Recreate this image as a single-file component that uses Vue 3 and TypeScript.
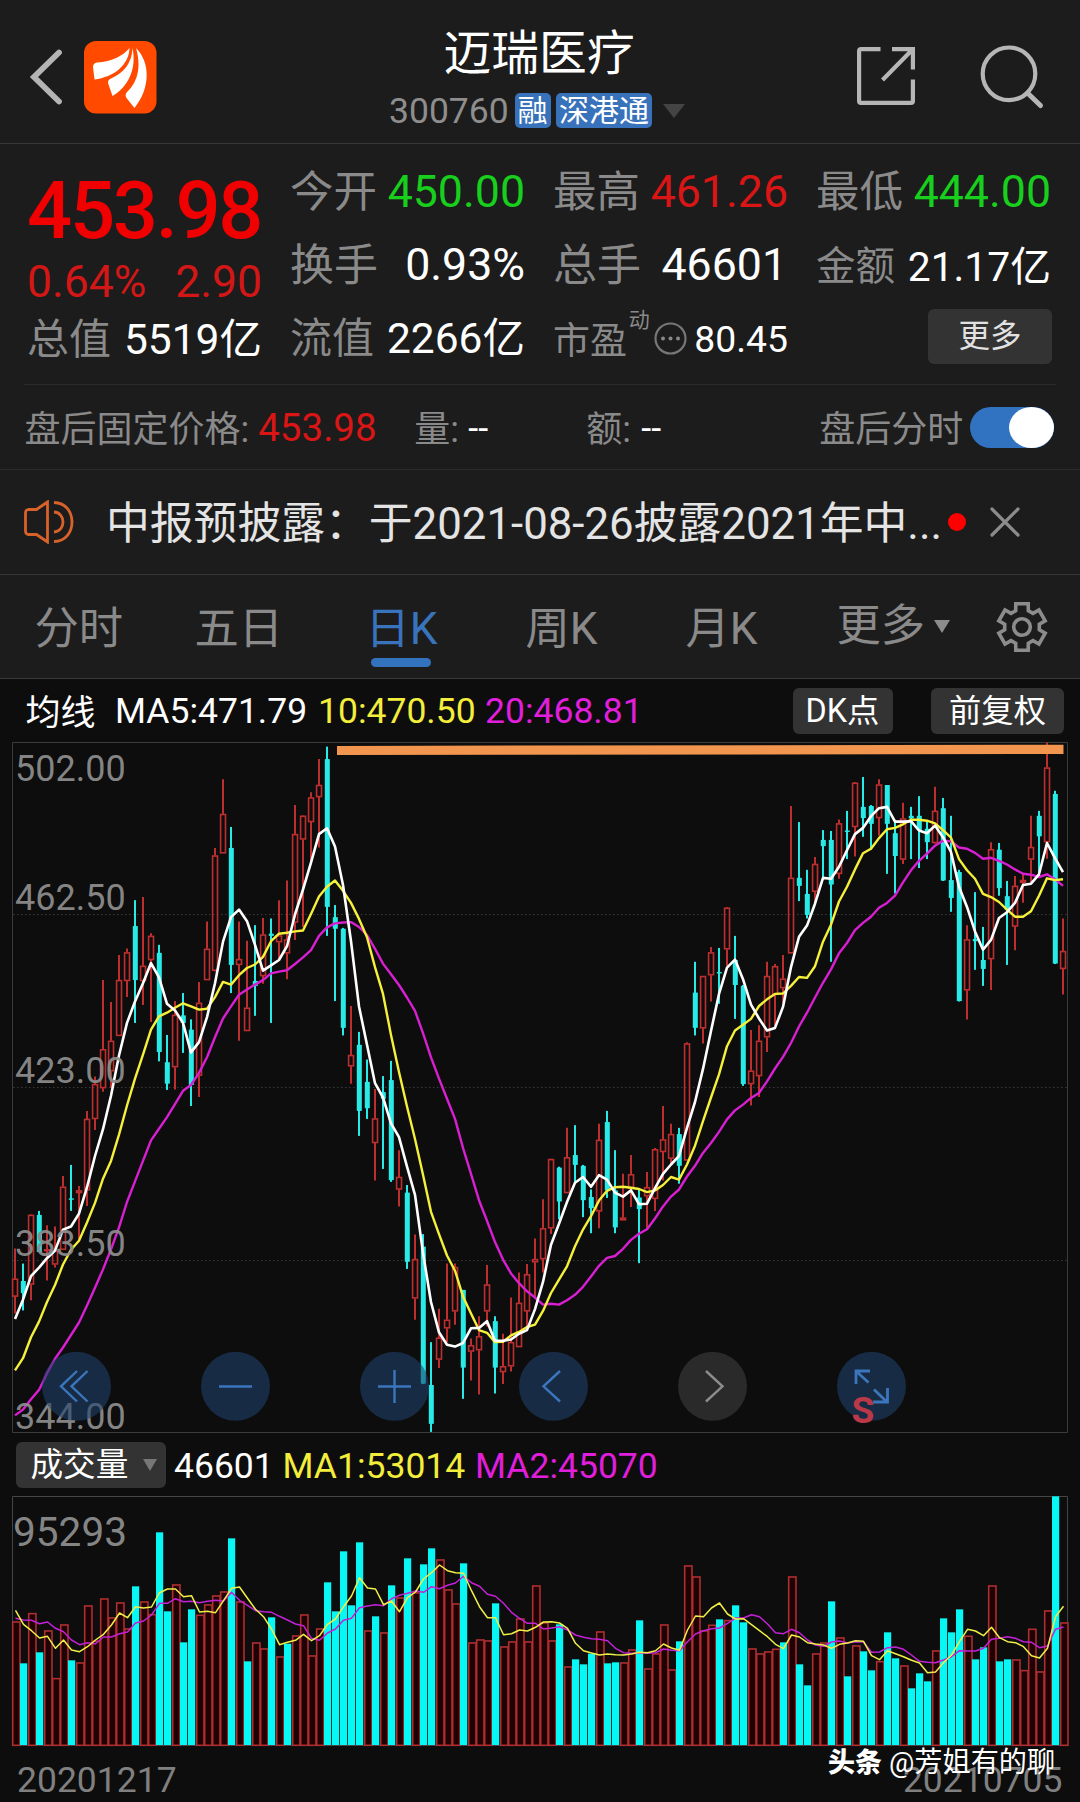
<script setup lang="ts">
type Candle = [kind: 'r' | 'c', high: number, top: number, bottom: number, low: number]

const STEP = 8
const FIRST = 15

// Daily candles, in ticks below the top of the price scale
const candleSource = `r1150,1218,1258,1296 c1184,1223,1250,1289 r1074,1075,1231,1266 c1066,1075,1158,1158 r1098,1152,1156,1222 r1101,1155,1186,1193 r988,1012,1153,1153 c963,1038,1041,1066 r1010,1020,1026,1130 r842,860,1020,1055 r765,782,860,885 r549,704,791,799
r598,685,753,790 r493,549,674,674 r478,487,551,587 c370,428,549,645 r363,517,551,605 r444,450,504,643 c470,488,710,731 c672,733,781,795 r596,627,744,794 c578,628,645,712 c637,660,784,831 r553,600,763,811
r418,479,549,549 r253,270,528,530 r99,177,265,265 c206,253,515,578 r418,502,515,685 r461,611,663,663 c426,551,562,629 r410,447,540,557 c411,445,450,645 r370,449,464,504 r326,458,489,547 r157,222,420,459
r180,181,234,430 r128,140,195,290 r54,112,139,252 c26,54,385,450 c381,408,434,596 c432,434,656,673 r607,717,742,781 c665,694,842,898 c727,777,836,860 r793,859,914,998 c764,800,815,972 c730,773,997,1001
r930,990,1018,1056 c1008,1025,1180,1196 r1119,1174,1262,1310 c1118,1146,1453,1454 c1360,1456,1543,1561 r1285,1350,1399,1418 r1184,1310,1329,1360 r1184,1192,1291,1321 c1243,1243,1417,1487 r1352,1367,1381,1446 r1302,1347,1378,1477 r1187,1231,1291,1325
c1302,1313,1417,1475 r1341,1414,1427,1454 r1260,1360,1414,1426 r1204,1272,1371,1371 r1185,1208,1291,1330 r1128,1174,1181,1262 r1040,1105,1174,1204 r949,950,1105,1118 c967,969,1045,1085 r880,946,1026,1026 c874,941,963,1003 c963,965,1042,1080
c1018,1035,1060,1116 r871,907,1067,1105 c842,867,1020,1037 c930,1020,1103,1116 r983,1081,1087,1087 r941,984,1015,1057 c1015,1036,1062,1183 r979,1013,1033,1105 r925,928,1039,1066 r831,906,934,998 r871,894,949,960 c880,894,965,1005
r688,691,953,953 c508,577,656,673 r540,540,657,691 r475,487,538,597 c477,531,534,602 r385,387,480,517 c450,504,560,636 c560,562,782,786 r661,752,782,830 r650,685,764,811 r508,540,677,710 r513,518,582,657
r493,546,567,600 r159,320,489,489 c195,320,338,372 c302,356,403,411 r273,289,351,380 c213,235,249,325 c215,235,335,508 r189,198,311,322 c170,214,217,278 r105,107,206,272 c94,161,186,228 c157,159,199,256
r99,111,186,225 c112,112,199,311 c190,220,271,355 r152,187,279,289 c161,181,187,278 c137,181,213,298 c193,210,240,278 r116,170,242,243 c141,164,326,327 c181,325,365,396 c302,307,596,597 r426,458,572,637
c352,457,462,526 c430,504,524,562 r240,256,502,571 c242,257,343,360 c327,361,392,515 r316,338,429,482 r310,325,331,376 r181,251,279,330 c170,181,227,310 r17,73,240,277 c125,132,512,513 r411,484,524,581`

const ma5 = [1308, 1265, 1212, 1193, 1172, 1155, 1108, 1101, 1072, 1013, 943, 883, 808, 718, 645, 597, 556, 511, 543, 602, 617, 645, 711, 688, 632, 556, 463, 408, 391, 417, 470, 528, 516, 504, 473, 402, 346, 286, 222, 209, 250, 336, 462, 608, 694, 780, 812, 870, 901, 967, 1030, 1160, 1270, 1338, 1366, 1370, 1362, 1329, 1328, 1313, 1357, 1357, 1354, 1341, 1333, 1286, 1225, 1142, 1095, 1046, 1003, 990, 1012, 986, 996, 1025, 1034, 1020, 1051, 1050, 1015, 983, 962, 943, 880, 822, 748, 663, 580, 521, 503, 547, 604, 635, 662, 656, 609, 520, 452, 427, 378, 320, 322, 295, 258, 222, 208, 182, 164, 161, 194, 194, 193, 214, 220, 203, 229, 262, 340, 385, 440, 481, 459, 410, 397, 376, 336, 333, 312, 242, 276, 307]
const ma10 = [1423, 1396, 1349, 1314, 1270, 1232, 1186, 1153, 1133, 1092, 1048, 994, 954, 895, 830, 770, 716, 660, 630, 622, 611, 601, 608, 615, 613, 587, 553, 559, 538, 522, 514, 497, 462, 445, 443, 440, 438, 401, 362, 340, 326, 349, 376, 412, 453, 520, 580, 672, 755, 832, 905, 985, 1068, 1118, 1166, 1200, 1258, 1296, 1333, 1339, 1360, 1359, 1345, 1337, 1326, 1321, 1290, 1250, 1220, 1190, 1145, 1108, 1078, 1043, 1021, 1013, 1012, 1014, 1017, 1024, 1020, 1008, 990, 996, 962, 920, 865, 812, 760, 697, 662, 649, 636, 607, 592, 580, 579, 562, 542, 544, 518, 463, 425, 373, 340, 301, 265, 255, 231, 211, 208, 200, 190, 190, 192, 198, 213, 230, 278, 303, 322, 356, 363, 374, 391, 407, 407, 395, 360, 321, 325, 323]
const ma20 = [1524, 1511, 1488, 1467, 1430, 1397, 1372, 1344, 1316, 1278, 1238, 1197, 1152, 1103, 1046, 1000, 954, 908, 882, 856, 827, 797, 784, 757, 722, 677, 635, 608, 582, 570, 559, 549, 534, 530, 527, 513, 498, 482, 450, 431, 422, 420, 419, 430, 448, 479, 512, 536, 560, 588, 618, 668, 722, 770, 815, 860, 925, 983, 1042, 1088, 1136, 1175, 1206, 1228, 1246, 1260, 1276, 1274, 1276, 1266, 1254, 1236, 1213, 1189, 1171, 1167, 1151, 1131, 1117, 1107, 1083, 1056, 1034, 1018, 989, 965, 936, 914, 889, 861, 841, 828, 813, 802, 776, 747, 721, 690, 653, 622, 588, 555, 525, 489, 466, 437, 421, 407, 387, 376, 360, 330, 303, 282, 266, 248, 237, 238, 252, 255, 264, 277, 275, 282, 290, 301, 311, 313, 318, 312, 323, 338]

// Volume bars: top edge of each bar
const volumeSource = `r575 c700 r550 c667 r602 r745 r584 c691 r698 r527 r633 r506 r563 r518 r596 c469 r515 r553 c307 c544 r464 c637 c538 r555 r524 r497 r485 c325 r515 c694 r638 r656 c562 r680 c641 r617 r554 r677 r596 c457 c544 c364 c526 c337 r602
c559 r608 c466 r503 c385 r488 c403 c355 r389 r479 r521 c400 r638 r629 r632 c520 r650 r635 r566 r635 r467 r578 r632 c583 r710 c688 c703 c671 r605 c700 c697 r698 r659 c571 r716 r671 r584 r719 c634 r407 r440 r602 r585 c568
r571 c526 c577 r656 r671 r665 r657 c637 r440 c703 c766 r671 r638 c514 r623 c739 r647 c664 c721 r694 c607 c685 r707 c775 c730 c754 r662 c565 c607 c538 r618 c688 c652 r467 c694 c688 r689 r721 r597 r725 r542 c199 r578`
const volMa1 = [541, 583, 602, 624, 619, 655, 630, 660, 665, 650, 630, 613, 585, 549, 563, 530, 534, 531, 488, 477, 477, 500, 497, 546, 544, 548, 512, 475, 471, 505, 538, 560, 597, 644, 637, 631, 613, 632, 617, 583, 567, 530, 498, 443, 474, 477, 524, 513, 545, 503, 486, 447, 428, 405, 422, 428, 430, 482, 530, 563, 563, 614, 611, 600, 603, 592, 576, 575, 579, 595, 640, 662, 669, 675, 672, 674, 675, 672, 667, 668, 662, 642, 654, 661, 600, 558, 560, 534, 519, 552, 567, 566, 584, 602, 620, 643, 656, 615, 621, 638, 642, 645, 655, 643, 639, 632, 634, 677, 689, 662, 671, 680, 691, 699, 728, 726, 698, 675, 635, 598, 603, 617, 592, 623, 635, 638, 650, 677, 684, 655, 560, 529]
const volMa2 = [565, 570, 571, 581, 576, 595, 605, 630, 644, 638, 641, 621, 621, 611, 606, 579, 573, 555, 520, 520, 506, 515, 514, 518, 514, 511, 513, 487, 511, 526, 542, 545, 547, 559, 570, 582, 587, 625, 631, 609, 597, 571, 565, 533, 528, 524, 527, 506, 496, 490, 483, 487, 470, 476, 466, 459, 439, 458, 469, 493, 499, 520, 547, 565, 580, 580, 597, 594, 590, 600, 615, 622, 626, 628, 632, 655, 668, 670, 668, 670, 668, 657, 661, 662, 635, 612, 602, 596, 594, 580, 564, 564, 554, 560, 582, 608, 611, 598, 608, 630, 645, 649, 636, 633, 639, 635, 636, 667, 666, 653, 651, 658, 675, 694, 697, 698, 690, 680, 662, 663, 663, 655, 628, 625, 620, 625, 635, 637, 653, 648, 598, 591]

const priceY = (v: number): number => v / 2.24 - 7
const volY = (v: number): number => v / 3 - 66
const x = (i: number): number => FIRST + i * STEP

const candles = candleSource.split(/\s+/).map((s, i) => {
  const [high, top, bottom, low] = s.slice(1).split(',').map(Number)
  const c: Candle = [s[0] as 'r' | 'c', high, top, bottom, low]
  const t = priceY(c[2])
  const b = priceY(c[3])
  return { up: c[0] === 'r', x: x(i), high: priceY(c[1]), top: t, bottom: Math.max(b, t + 1.4), low: priceY(c[4]) }
})

const volumes = volumeSource.split(/\s+/).map((s, i) => ({
  up: s[0] === 'r',
  x: x(i),
  top: volY(Number(s.slice(1))),
}))

const line = (values: number[], y: (v: number) => number, dx = 0): string =>
  values.map((v, i) => `${x(i) + dx},${y(v).toFixed(1)}`).join(' ')

const priceLabels = [
  { text: '502.00', y: 39 },
  { text: '462.50', y: 168 },
  { text: '423.00', y: 341 },
  { text: '383.50', y: 514 },
  { text: '344.00', y: 687 },
]
const tabs = [
  { text: '分时', cls: 't1' },
  { text: '五日', cls: 't2' },
  { text: '日K', cls: 't3 active' },
  { text: '周K', cls: 't4' },
  { text: '月K', cls: 't5' },
]
const gearPoints = (() => {
  const pts: string[] = []
  const shape: [number, number][] = [[-15, 24], [15, 24], [21, 17.5], [39, 17.5]]
  for (let k = 0; k < 6; k++) {
    for (const [a, r] of shape) {
      const t = ((k * 60 + a - 90) * Math.PI) / 180
      pts.push(`${(26 + r * Math.cos(t)).toFixed(1)},${(26 + r * Math.sin(t)).toFixed(1)}`)
    }
  }
  return pts.join(' ')
})()
</script>

<template>
  <div class="app">
    <header class="top">
      <svg class="back" width="36" height="60" viewBox="0 0 36 60"><path d="M31 5.500 6 30 31 54.500" fill="none" stroke="#b4b4b4" stroke-width="5.800" stroke-linecap="round" /></svg>
      <svg class="logo" width="73" height="73" viewBox="0 0 73 73">
        <rect width="72.500" height="72.500" rx="12" fill="#ff4a00" />
        <path d="M45.500 7C40 14 28 21 13 21.500Q9 22 9 26L10.500 38.500C30 36 45 24 45.500 7Z" fill="#fff" />
        <path d="M48.500 7C48 22 40 32 26 38Q23.500 39.500 24 42L28.500 55C44 46 53 28 48.500 7Z" fill="#fff" />
        <path d="M52 7C57 24 55 40 43 51Q40.500 54 42.500 57L50.500 67C66 48 67 22 52 7Z" fill="#fff" />
      </svg>
      <div class="title">
        <div class="name">迈瑞医疗</div>
        <div class="sub">
          <span class="code">300760</span><span class="badge b1">融</span><span class="badge b2">深港通</span>
          <svg width="22" height="14" viewBox="0 0 22 14"><path d="M0 0H22L11 14Z" fill="#444" /></svg>
        </div>
      </div>
      <svg class="share" width="58" height="58" viewBox="0 0 58 58" fill="none" stroke="#b6b6b6" stroke-width="4.200">
        <path d="M23.500 2.100H4Q2.100 2.100 2.100 4V54Q2.100 55.900 4 55.900H54Q55.900 55.900 55.900 54V32.500" />
        <path d="M35 2.100H55.900V22.500M55 3 25.500 33" />
      </svg>
      <svg class="search" width="66" height="66" viewBox="0 0 66 66" fill="none" stroke="#b6b6b6" stroke-width="4.200"><circle cx="29" cy="28.800" r="26.300" /><path d="M47.500 48 60.500 60.500" stroke-width="5" stroke-linecap="round" /></svg>
    </header>

    <section class="quote">
      <div class="col">
        <div class="price">453.98</div>
        <div class="pair chg"><span>0.64%</span><span>2.90</span></div>
        <div class="pair cap"><i>总值</i><b>5519亿</b></div>
      </div>
      <div class="col">
        <div class="pair r1"><i>今开</i><b class="green">450.00</b></div>
        <div class="pair r2"><i>换手</i><b>0.93%</b></div>
        <div class="pair cap"><i>流值</i><b>2266亿</b></div>
      </div>
      <div class="col">
        <div class="pair r1"><i>最高</i><b class="red">461.26</b></div>
        <div class="pair r2 hands"><i>总手</i><b>46601</b></div>
        <div class="pair pe">
          <i>市盈</i><sup>动</sup>
          <svg width="33" height="33" viewBox="0 0 33 33"><circle cx="16.500" cy="16.500" r="15" fill="none" stroke="#777" stroke-width="2.200" /><g fill="#888"><circle cx="9" cy="16.500" r="2" /><circle cx="16.500" cy="16.500" r="2" /><circle cx="24" cy="16.500" r="2" /></g></svg>
          <b>80.45</b>
        </div>
      </div>
      <div class="col">
        <div class="pair r1"><i>最低</i><b class="green">444.00</b></div>
        <div class="pair r2 amt"><i>金额</i><b>21.17亿</b></div>
        <div class="more-row"><span class="more">更多</span></div>
      </div>
    </section>

    <section class="after">
      <i>盘后固定价格:</i><b class="red p">453.98</b><i class="vol">量:</i><b class="dash">--</b><i class="amount">额:</i><b class="dash">--</b><i class="label">盘后分时</i><span class="toggle"><span class="knob"></span></span>
    </section>

    <section class="notice">
      <svg width="52" height="44" viewBox="0 0 52 44" fill="none" stroke="#d8622a" stroke-width="2.800">
        <path d="M24.500 2 13.500 9.500H5Q2.500 10 2.500 13V31Q2.500 34 5 34.500H13.500L24.500 42Z" /><path d="M31 2.500C55 3 55 41 31 41.500M31 12C43 12.500 43 31.500 31 32" />
      </svg>
      <span class="msg">中报预披露：于2021-08-26披露2021年中...</span>
      <span class="dot"></span>
      <svg class="close" width="30" height="30" viewBox="0 0 30 30"><path d="M2 2 28 28M28 2 2 28" stroke="#8c8c8c" stroke-width="3.200" stroke-linecap="round" /></svg>
    </section>

    <nav class="tabs">
      <span v-for="t in tabs" :key="t.text" class="tab" :class="t.cls">{{ t.text }}</span>
      <span class="tab t6">更多<svg width="16" height="13" viewBox="0 0 16 13"><path d="M0 0H16L8 13Z" fill="#8c8c8c" /></svg></span>
      <svg class="gear" width="52" height="52" viewBox="0 0 52 52" fill="none" stroke="#8c8c8c" stroke-width="3.600"><polygon :points="gearPoints" /><circle cx="26" cy="26" r="8.300" /></svg>
    </nav>

    <section class="legend">
      <span class="avg">均线</span><span class="m5">MA5:471.79</span><span class="m10 yellow">10:470.50</span><span class="m20 magenta">20:468.81</span>
      <span class="chip dk">DK点</span><span class="chip fq">前复权</span>
    </section>

    <section class="price-chart">
      <svg width="1080" height="692" viewBox="0 0 1080 692">
        <path d="M12.500 .5H1067.500V690.500H12.500Z" fill="none" stroke="#3b3b3b" />
        <path d="M13 172.500H1067M13 345.500H1067M13 518.500H1067" stroke="#3a3a3a" stroke-dasharray="1.500 2.500" />
        <g v-for="c in candles" :key="c.x">
          <g v-if="c.up" stroke="#bd2f2f" fill="none">
            <path :d="`M${c.x} ${c.high}V${c.top}M${c.x} ${c.bottom}V${c.low}`" stroke-width="2" />
            <rect :x="c.x - 2.400" :y="c.top + .5" width="4.900" :height="Math.max(c.bottom - c.top - 1, .6)" stroke-width="1.600" />
          </g>
          <g v-else fill="#28ebe8">
            <rect :x="c.x - 1" :y="c.high" width="2" :height="c.low - c.high" />
            <rect :x="c.x - 2.200" :y="c.top" width="5" :height="c.bottom - c.top" />
          </g>
        </g>
        <g fill="none" stroke-linejoin="round">
          <polyline :points="line(ma20, priceY)" stroke="#d81fd2" stroke-width="2.400" />
          <polyline :points="line(ma10, priceY)" stroke="#f5f03a" stroke-width="2.400" />
          <polyline :points="line(ma5, priceY)" stroke="#fff" stroke-width="2.600" />
        </g>
        <path d="M337 8.500 1063.500 7.300" stroke="#f2954f" stroke-width="9.200" />
        <g class="axis"><text v-for="l in priceLabels" :key="l.text" x="15" :y="l.y">{{ l.text }}</text></g>
        <g fill="#1f426e" fill-opacity=".58">
          <circle cx="76.500" cy="644.300" r="34.500" /><circle cx="235.500" cy="644.300" r="34.500" /><circle cx="394.500" cy="644.300" r="34.500" /><circle cx="553.500" cy="644.300" r="34.500" />
          <circle cx="712.500" cy="644.300" r="34.500" fill="#2d2d2d" fill-opacity=".92" /><circle cx="871.500" cy="644.300" r="34.500" />
        </g>
        <text class="sell" x="851.500" y="681">S</text>
        <g fill="none" stroke="#3b76bd" stroke-width="2.400">
          <path d="M77 629 61 644.300 77 659.500M87.500 629 71.500 644.300 87.500 659.500M219 644.500H252M378 644.500H411M394.500 628V661M560 629 543.500 644.300 560 659.500" />
          <path d="M706 629 722.500 644.300 706 659.500" stroke="#8d8d8d" />
          <path d="M856 642V629H870M857 630 868.500 640.500M873 660H887.500V646M886 659 874 647.500" stroke-width="2.800" />
        </g>
      </svg>
    </section>

    <section class="vol-head">
      <span class="chip pick">成交量<svg width="14" height="12" viewBox="0 0 14 12"><path d="M0 0H14L7 12Z" fill="#777" /></svg></span>
      <span class="v0">46601</span><span class="v1 yellow">MA1:53014</span><span class="v2 magenta">MA2:45070</span>
    </section>

    <section class="vol-chart">
      <svg width="1080" height="252" viewBox="0 0 1080 252">
        <path d="M12.500 .5H1067.500V249.500H12.500Z" fill="none" stroke="#454545" />
        <g v-for="v in volumes" :key="v.x">
          <rect v-if="v.up" :x="v.x - 2.300" :y="v.top + .3" width="7.300" :height="249 - v.top" fill="#1f0203" stroke="#ad2f31" stroke-width="1.600" />
        </g>
        <g v-for="v in volumes" :key="v.x">
          <rect v-if="!v.up" :x="v.x - 3" :y="v.top" width="7.200" :height="249 - v.top" fill="#07f8f4" />
        </g>
        <g fill="none" stroke-linejoin="round" stroke-width="1.500">
          <polyline :points="line(volMa2, volY, .5)" stroke="#c321d6" />
          <polyline :points="line(volMa1, volY, .5)" stroke="#f0ef48" />
        </g>
        <text class="vmax" x="13" y="49.800">95293</text>
      </svg>
    </section>

    <footer class="dates">
      <span>20201217</span><span>20210705</span>
      <div class="mark"><b>头条</b><span>@芳姐有的聊</span></div>
    </footer>
  </div>
</template>

<style>
html, body { margin: 0; background: #0d0d0d; }
</style>

<style scoped>
.app { width: 1080px; height: 1802px; overflow: hidden; background: #0d0d0d; color: #fff; font-family: Roboto, "Noto Sans CJK SC", sans-serif; white-space: nowrap; }
.app *, .app { box-sizing: border-box; }
svg { display: block; flex: none; }
i, b, sup { font-style: normal; font-weight: 400; }
i { color: #8a8a8a; }
.green { color: #17cf1c; }
.red { color: #d91515; }
.yellow { color: #f3ee3c; }
.magenta { color: #e01fdc; }

.top { height: 144px; display: flex; background: #1c1c1c; border-bottom: 1px solid #343838; }
.back { margin: 46.500px 0 0 27.500px; }
.logo { margin: 40.500px 0 0 20.500px; }
.title { margin-left: 232px; width: 298px; }
.name { height: 62px; margin-top: 23px; line-height: 63px; font-size: 47.800px; margin-left: 54.500px; }
.sub { display: flex; align-items: center; height: 50px; margin-top: .5px; }
.code { font-size: 35.500px; color: #8e8e8e; width: 125.500px; line-height: 42px; padding-top: 1px; }
.badge { height: 35px; line-height: 36px; border-radius: 5px; background: #3872bb; font-size: 30px; text-align: center; }
.b1 { width: 36px; margin-right: 5.500px; }
.b2 { width: 96px; margin-right: 10.500px; }
.share { margin: 47px 0 0 169.500px; }
.search { margin: 44.500px 0 0 65px; }

.quote { height: 240px; padding: 11px 27px 0; background: #1c1c1c; display: flex; gap: 28px; }
.col { width: 235px; }
.pair { display: flex; align-items: center; justify-content: space-between; }
.price { margin-top: 7px; height: 97px; line-height: 97px; color: #f00000; font-size: 79.500px; font-weight: 500; letter-spacing: -2.300px; }
.chg { height: 44px; padding-top: 2px; font-size: 44.500px; color: #d31717; }
.r1, .r2 { height: 73px; font-size: 44.700px; }
.r1 i, .r2 i { margin-top: -6px; }
.r1 i { font-size: 43.500px; }
.r2 i { font-size: 44px; margin-top: -5px; }
.cap { height: 73px; font-size: 42.500px; padding-bottom: 6px; }
.cap i { font-size: 42px; }
.col:first-child .cap { height: 71px; }
.hands { padding-right: 1px; }
.amt { font-size: 40.800px; padding-bottom: 2px; }
.amt i { font-size: 39.500px; margin-top: -2px; }
.pe { height: 76px; font-size: 37.300px; }
.pe i { font-size: 37px; margin-top: -2px; }
.pe sup { font-size: 21px; line-height: 22px; color: #8a8a8a; margin: -38px 1px 0 -1px; }
.pe svg { margin: -2px 5px 0 0; }
.more-row { display: flex; justify-content: flex-end; height: 73px; padding-top: 8px; }
.more { width: 124px; height: 55px; margin-right: -1px; border-radius: 6px; background: #333; color: #e2e2e2; font-size: 31.500px; line-height: 56px; text-align: center; }

.after { position: relative; height: 86px; padding: 1px 26px 0 24.500px; display: flex; align-items: center; background: #1c1c1c; border-bottom: 1px solid #2c2c2c; font-size: 36px; }
.after::before { content: ""; position: absolute; left: 24px; right: 24px; top: 0; height: 1px; background: #2b2b2b; }
.after i { margin-top: -2px; }
.after .p { font-size: 38.500px; width: 156px; margin-left: 9px; padding-top: 1px; }
.after .vol { width: 54px; }
.after .dash { width: 118px; padding-top: 4px; }
.after .amount { width: 55px; }
.after .label { margin-left: 60px; }
.toggle { margin-left: auto; width: 84px; height: 41px; border-radius: 21px; background: #3173c0; display: flex; justify-content: flex-end; }
.knob { width: 45px; height: 41px; border-radius: 50%; background: #fff; }

.notice { height: 105px; padding-left: 23px; display: flex; align-items: center; background: #1c1c1c; border-bottom: 1px solid #363636; }
.msg { margin: -4px 0 0 31px; width: 842px; font-size: 43.800px; color: #e4e4e4; }
.dot { width: 18px; height: 18px; border-radius: 50%; background: #f00; }
.close { margin-left: 24px; }

.tabs { height: 104px; display: flex; align-items: center; padding-left: 34.500px; background: #1c1c1c; border-bottom: 1px solid #3a3a3a; font-size: 44.300px; color: #8a8a8a; }
.tab { position: relative; height: 103px; line-height: 109px; }
.t1 { width: 160px; }
.t2 { width: 171px; }
.t3 { width: 160px; }
.t4 { width: 160px; }
.t5 { width: 151px; }
.active { color: #3873bc; }
.active::after { content: ""; position: absolute; left: 5px; bottom: 11px; width: 60px; height: 9px; border-radius: 5px; background: #3372bd; }
.t6 { display: flex; align-items: center; gap: 9px; width: 159.500px; }
.gear { margin-top: 1px; }

.legend { height: 63px; display: flex; align-items: center; padding-left: 25.500px; font-size: 35.500px; }
.avg { width: 89.500px; font-size: 35px; margin-top: -2px; }
.m5 { width: 203px; }
.m10 { width: 167px; }
.m20 { width: 307.500px; }
.chip { height: 46px; line-height: 46px; border-radius: 6px; background: #333; text-align: center; font-size: 32.300px; }
.dk { width: 100px; }
.fq { width: 133px; margin-left: 38.500px; }

.price-chart { height: 692px; }
.axis { font-size: 36px; fill: #8c8c8c; fill-opacity: .95; }
.sell { font-size: 37px; font-weight: 700; fill: #bb3848; }

.vol-head { height: 62px; padding: 0 0 1px 15.500px; display: flex; align-items: center; font-size: 35.500px; }
.vol-head > span:not(.pick) { padding-top: 2px; }
.pick { width: 150px; display: flex; align-items: center; justify-content: flex-end; gap: 14px; padding-right: 9px; line-height: 48px; font-size: 32.700px; }
.v0 { margin-left: 8.500px; width: 108.500px; }
.v1 { width: 192.500px; }

.vol-chart { height: 252px; }
.vmax { font-size: 40.600px; fill: #858585; }

.dates { position: relative; height: 54px; padding: 8px 17.500px 0 17px; display: flex; justify-content: space-between; font-size: 35.500px; line-height: 49px; color: #808080; }
.mark { position: absolute; left: 828px; top: -1.500px; display: flex; gap: 7px; color: #fff; font-size: 28.200px; line-height: 32px; }
.mark b { font-weight: 900; font-size: 27px; }
</style>
